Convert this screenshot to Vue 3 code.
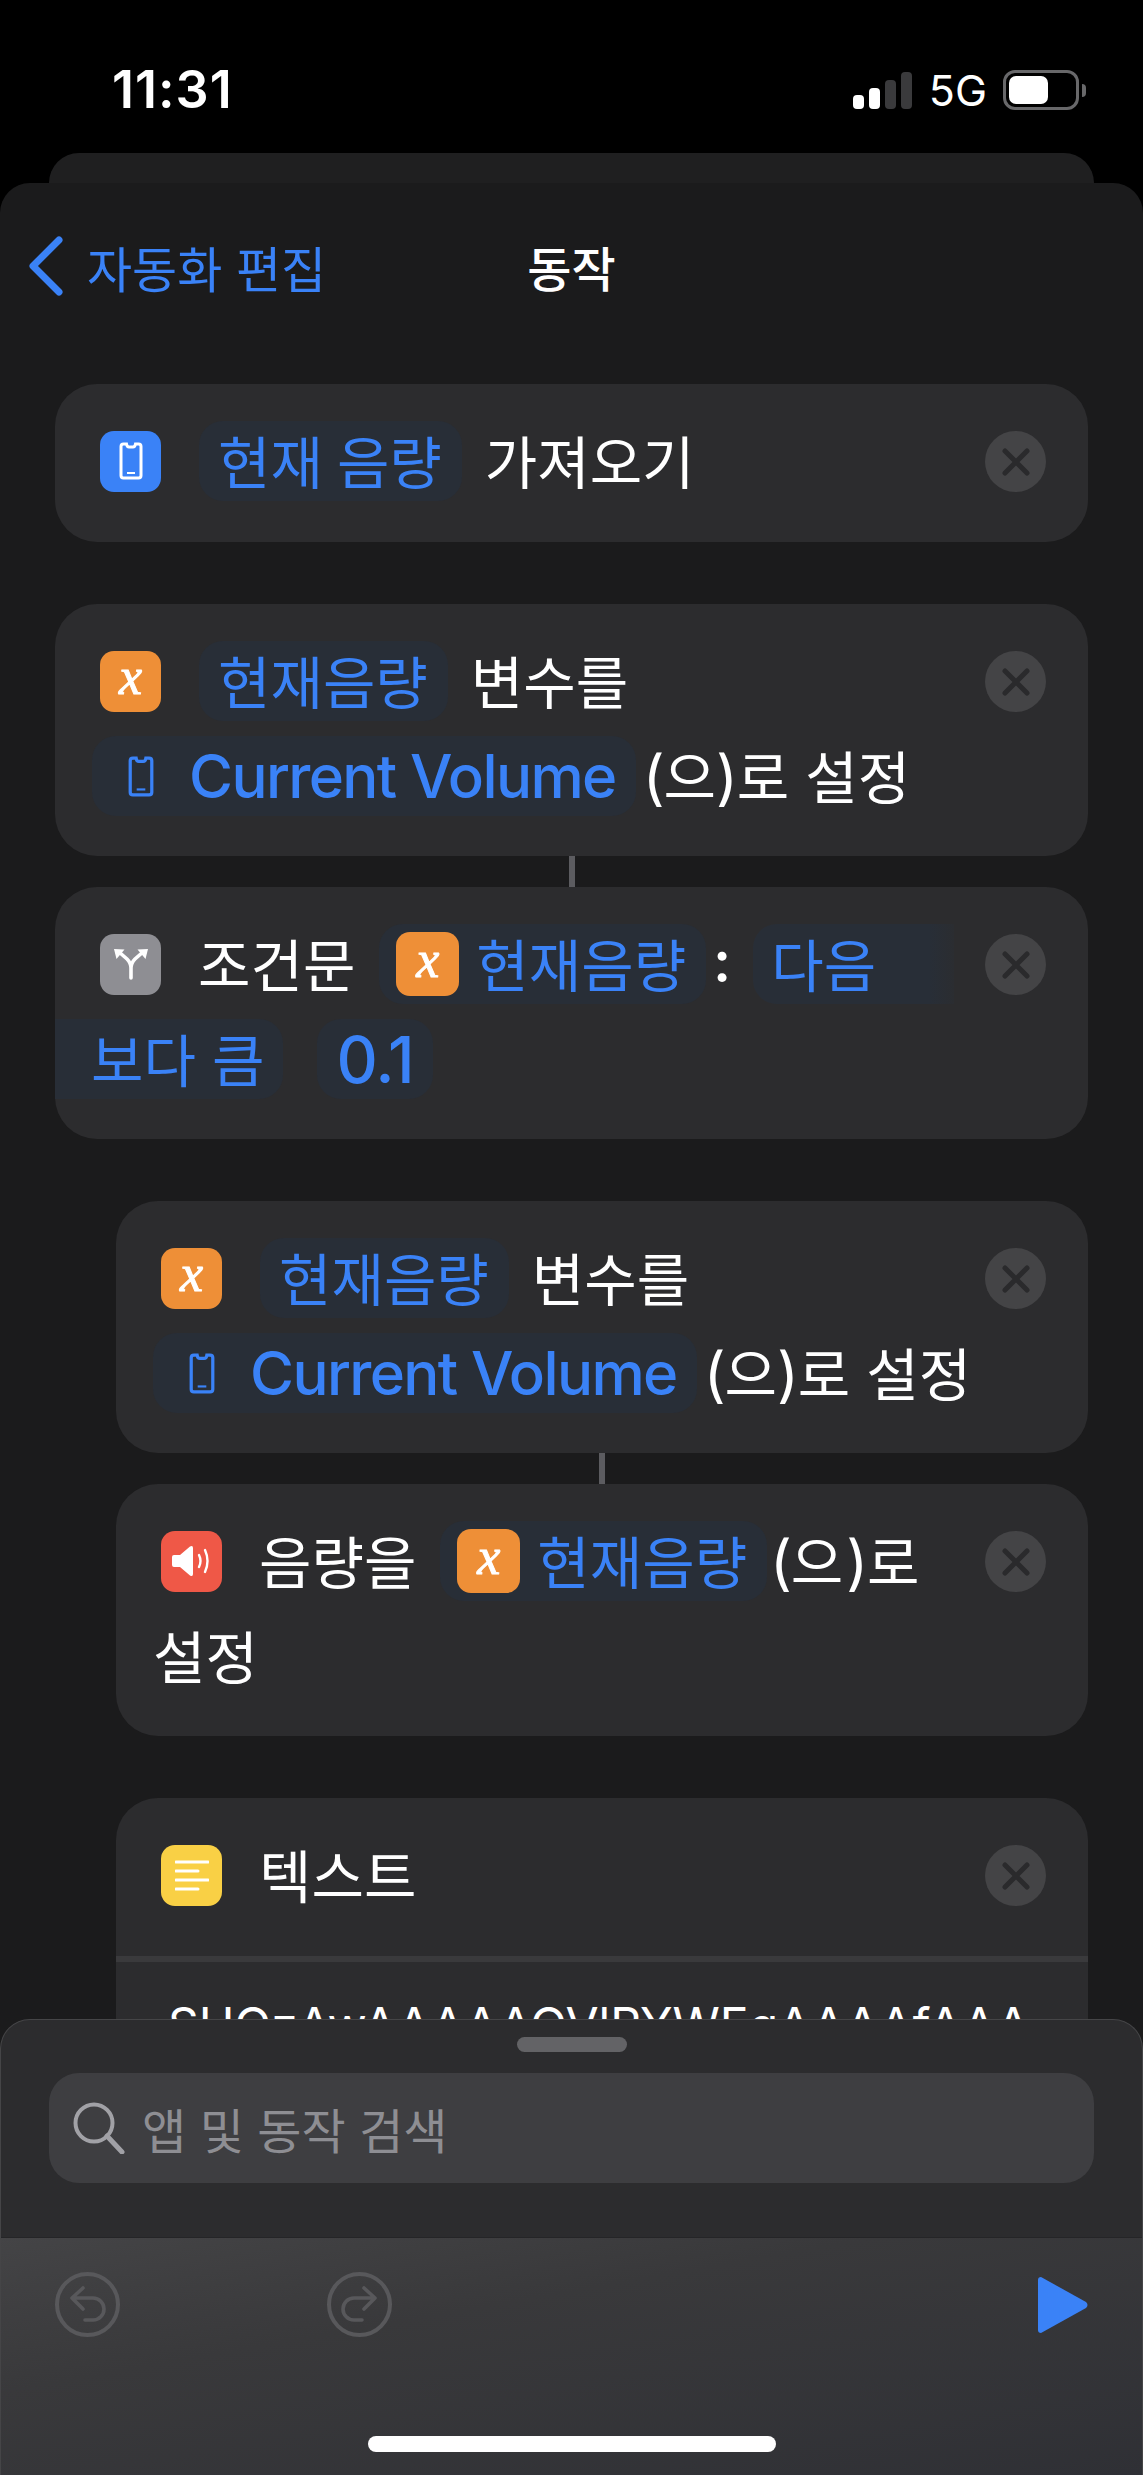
<template>
  <div class="page">
    <div class="status">
      <span class="time">11:31</span>
      <div class="status-right">
        <div class="signal">
          <i class="b1"></i><i class="b2"></i><i class="b3 dim"></i><i class="b4 dim"></i>
        </div>
        <span class="net">5G</span>
        <div class="battery"><div class="level"></div></div>
        <div class="nub"></div>
      </div>
    </div>

    <div class="sheet-back"></div>

    <div class="sheet">
      <div class="nav">
        <div class="back">
          <svg width="36" height="60" viewBox="0 0 36 60"><path d="M31 4 L5 30 L31 56" fill="none" stroke="#3a82f7" stroke-width="7" stroke-linecap="round" stroke-linejoin="round"/></svg>
          <span>자동화 편집</span>
        </div>
        <div class="title">동작</div>
        <div></div>
      </div>

      <div class="list">
        <!-- 현재 음량 -->
        <div class="card short">
          <div class="body">
            <div class="row">
              <span class="icon blue">
                <svg width="24" height="38" viewBox="0 0 24 38"><path d="M4.5 2 H7.5 Q8 5 10 5 H14 Q16 5 16.5 2 H19.5 Q22 2 22 4.5 V33.5 Q22 36 19.5 36 H4.5 Q2 36 2 33.5 V4.5 Q2 2 4.5 2 Z" fill="none" stroke="#fff" stroke-width="3"/><path d="M8 31 H16" stroke="#fff" stroke-width="2"/></svg>
              </span>
              <span class="pill first spaced">현재 음량</span>
              <span class="txt after">가져오기</span>
            </div>
          </div>
          <button class="close"><svg width="28" height="28" viewBox="0 0 28 28"><path d="M3 3 L25 25 M25 3 L3 25" stroke="#2a2a2c" stroke-width="5" stroke-linecap="round"/></svg></button>
        </div>

        <!-- 변수 설정 -->
        <div class="card joined gap">
          <div class="body">
            <div class="row">
              <span class="icon orange">x</span>
              <span class="pill first">현재음량</span>
              <span class="txt after">변수를</span>
            </div>
            <div class="row">
              <span class="pill volume">
                <svg width="26" height="41" viewBox="0 0 24 38"><path d="M4.5 2 H7.5 Q8 5 10 5 H14 Q16 5 16.5 2 H19.5 Q22 2 22 4.5 V33.5 Q22 36 19.5 36 H4.5 Q2 36 2 33.5 V4.5 Q2 2 4.5 2 Z" fill="none" stroke="#3a82f7" stroke-width="3"/><path d="M8 31 H16" stroke="#3a82f7" stroke-width="2"/></svg>
                <span class="lat">Current Volume</span>
              </span>
              <span class="txt paren"><span class="lat">(</span>으<span class="lat">)</span>로 설정</span>
            </div>
          </div>
          <button class="close"><svg width="28" height="28" viewBox="0 0 28 28"><path d="M3 3 L25 25 M25 3 L3 25" stroke="#2a2a2c" stroke-width="5" stroke-linecap="round"/></svg></button>
          <div class="link"></div>
        </div>

        <!-- 조건문 -->
        <div class="card tall gap">
          <div class="body">
            <div class="row">
              <span class="icon gray">
                <svg width="34" height="32" viewBox="0 0 34 32"><path d="M17 30 V20 Q17 15 13 11 L5 4 M17 20 Q17 15 21 11 L29 4" fill="none" stroke="#fff" stroke-width="3.6" stroke-linecap="round"/><path d="M0 1 L10.5 1.5 L2.5 11 Z M34 1 L23.5 1.5 L31.5 11 Z" fill="#fff"/></svg>
              </span>
              <span class="txt label">조건문</span>
              <span class="pill var">
                <span class="icon orange mini">x</span>
                <span class="ko">현재음량</span>
              </span>
              <span class="txt colon">:</span>
              <span class="pill cut">다음</span>
            </div>
            <div class="row">
              <span class="pill bleed">보다 큼</span>
              <span class="pill num"><span class="lat">0.1</span></span>
            </div>
          </div>
          <button class="close"><svg width="28" height="28" viewBox="0 0 28 28"><path d="M3 3 L25 25 M25 3 L3 25" stroke="#2a2a2c" stroke-width="5" stroke-linecap="round"/></svg></button>
        </div>

        <!-- 조건문 안쪽 -->
        <div class="card nested joined gap">
          <div class="body">
            <div class="row">
              <span class="icon orange">x</span>
              <span class="pill first">현재음량</span>
              <span class="txt after">변수를</span>
            </div>
            <div class="row">
              <span class="pill volume">
                <svg width="26" height="41" viewBox="0 0 24 38"><path d="M4.5 2 H7.5 Q8 5 10 5 H14 Q16 5 16.5 2 H19.5 Q22 2 22 4.5 V33.5 Q22 36 19.5 36 H4.5 Q2 36 2 33.5 V4.5 Q2 2 4.5 2 Z" fill="none" stroke="#3a82f7" stroke-width="3"/><path d="M8 31 H16" stroke="#3a82f7" stroke-width="2"/></svg>
                <span class="lat">Current Volume</span>
              </span>
              <span class="txt paren"><span class="lat">(</span>으<span class="lat">)</span>로 설정</span>
            </div>
          </div>
          <button class="close"><svg width="28" height="28" viewBox="0 0 28 28"><path d="M3 3 L25 25 M25 3 L3 25" stroke="#2a2a2c" stroke-width="5" stroke-linecap="round"/></svg></button>
          <div class="link"></div>
        </div>

        <div class="card nested tall">
          <div class="body">
            <div class="row">
              <span class="icon red">
                <svg width="40" height="32" viewBox="0 0 40 32"><path d="M2 10 H8 L18 1.5 Q21 0 21 3 V29 Q21 32 18 30.5 L8 22 H2 Q0 22 0 20 V12 Q0 10 2 10 Z" fill="#fff"/><path d="M27 10 Q30 16 27 22 M33 5 Q38 16 33 27" fill="none" stroke="#fff" stroke-width="2.4" stroke-linecap="round"/></svg>
              </span>
              <span class="txt label">음량을</span>
              <span class="pill var">
                <span class="icon orange mini">x</span>
                <span class="ko">현재음량</span>
              </span>
              <span class="txt paren tight"><span class="lat">(</span>으<span class="lat">)</span>로</span>
            </div>
            <div class="row"><span class="txt">설정</span></div>
          </div>
          <button class="close"><svg width="28" height="28" viewBox="0 0 28 28"><path d="M3 3 L25 25 M25 3 L3 25" stroke="#2a2a2c" stroke-width="5" stroke-linecap="round"/></svg></button>
        </div>

        <!-- 텍스트 -->
        <div class="card nested text-card gap">
          <div class="body">
            <div class="row">
              <span class="icon yellow">
                <svg width="34" height="34" viewBox="0 0 34 34"><path d="M1 4 H33 M1 13 H23 M1 22 H33 M1 31 H23" stroke="#fff" stroke-width="3" stroke-linecap="round"/></svg>
              </span>
              <span class="txt label">텍스트</span>
            </div>
          </div>
          <button class="close"><svg width="28" height="28" viewBox="0 0 28 28"><path d="M3 3 L25 25 M25 3 L3 25" stroke="#2a2a2c" stroke-width="5" stroke-linecap="round"/></svg></button>
          <div class="divider"></div>
          <div class="base64">SUQzAwAAAAAOVlRYWEgAAAAfAAA</div>
        </div>
      </div>
    </div>

    <div class="drawer">
      <div class="handle"></div>
      <div class="search">
        <svg width="52" height="52" viewBox="0 0 52 52"><circle cx="21" cy="21" r="18.5" fill="none" stroke="#a1a1a6" stroke-width="4"/><path d="M34 34 L49 50" stroke="#a1a1a6" stroke-width="5" stroke-linecap="round"/></svg>
        <span>앱 및 동작 검색</span>
      </div>
      <div class="toolbar">
        <div class="tools">
          <div class="history">
            <svg width="65" height="65" viewBox="0 0 65 65"><circle cx="32.5" cy="32.5" r="30.5" fill="none" stroke="#58585b" stroke-width="4"/><path d="M28 16 L17 26 L28 37 M17 26 H38 A11 11 0 0 1 38 48 H30" fill="none" stroke="#58585b" stroke-width="3.6" stroke-linecap="round" stroke-linejoin="round"/></svg>
            <svg width="65" height="65" viewBox="0 0 65 65"><circle cx="32.5" cy="32.5" r="30.5" fill="none" stroke="#58585b" stroke-width="4"/><path d="M37 16 L48 26 L37 37 M48 26 H27 A11 11 0 0 0 27 48 H35" fill="none" stroke="#58585b" stroke-width="3.6" stroke-linecap="round" stroke-linejoin="round"/></svg>
          </div>
          <svg width="50" height="56" viewBox="0 0 50 56"><path d="M3 0 L48 25 Q51 28 48 31 L3 56 Q0 56 0 53 V3 Q0 0 3 0 Z" fill="#3a82f7"/></svg>
        </div>
        <div class="home"></div>
      </div>
    </div>
  </div>
</template>

<script setup>
</script>

<style>
html, body { background: #000; }
</style>

<style scoped>
.page {
  position: relative;
  width: 1143px;
  height: 2475px;
  overflow: hidden;
  background: #000;
  color: #fff;
  font-family: Inter, "Noto Sans CJK KR", sans-serif;
}

/* status bar */
.status {
  height: 153px;
  padding: 0 57px 0 112px;
  box-sizing: border-box;
  display: flex;
  justify-content: space-between;
  align-items: flex-start;
}
.time {
  margin-top: 60px;
  font-size: 52px;
  line-height: 60px;
  font-weight: 600;
  letter-spacing: 1px;
}
.status-right {
  display: flex;
  align-items: center;
  margin-top: 70px;
  height: 40px;
}
.signal { display: flex; align-items: flex-end; gap: 5px; height: 38px; }
.signal i { display: block; width: 11px; border-radius: 4px; background: #fff; }
.signal .b1 { height: 14px; }
.signal .b2 { height: 21px; }
.signal .b3 { height: 29px; }
.signal .b4 { height: 37px; }
.signal .dim { background: #3a3a3c; }
.net { margin-left: 17px; font-size: 43px; line-height: 40px; }
.battery {
  margin-left: 16px;
  width: 76px;
  height: 40px;
  box-sizing: border-box;
  border: 3px solid #68686a;
  border-radius: 12px;
  padding: 3px;
}
.level { width: 39px; height: 100%; border-radius: 7px; background: #fff; }
.nub { width: 4px; height: 13px; margin-left: 3px; background: #68686a; border-radius: 0 4px 4px 0; }

/* sheets */
.sheet-back {
  height: 60px;
  margin: 0 49px -30px;
  border-radius: 30px 30px 0 0;
  background: #1f1f20;
}
.sheet {
  position: relative;
  height: 2292px;
  border-radius: 30px 30px 0 0;
  background: #1b1b1c;
}
.nav {
  height: 166px;
  margin-bottom: 35px;
  display: grid;
  grid-template-columns: 1fr auto 1fr;
  align-items: center;
}
.back {
  display: flex;
  align-items: center;
  gap: 23px;
  padding-left: 28px;
  color: #3a82f7;
  font-size: 49px;
}
.title { font-size: 48px; font-weight: 500; }

/* action cards */
.list { padding: 0 55px; }
.card {
  position: relative;
  display: flex;
  align-items: flex-start;
  padding: 37px 42px 0 37px;
  background: #2c2c2e;
  border-radius: 42px;
  box-sizing: border-box;
  font-size: 57px;
}
.short { height: 158px; }
.joined { height: 252px; }
.tall { height: 252px; }
.gap { margin-top: 62px; }
.joined + .tall { margin-top: 31px; }
.nested { margin-left: 61px; }
.text-card { height: 600px; }
.body { flex: 1; min-width: 0; }
.row { display: flex; align-items: center; height: 80px; margin-bottom: 15px; white-space: nowrap; }
.link {
  position: absolute;
  left: 50%;
  bottom: -31px;
  width: 6px;
  height: 31px;
  margin-left: -3px;
  background: #5c5c60;
}

.icon {
  flex: none;
  width: 61px;
  height: 61px;
  margin-left: 8px;
  border-radius: 14px;
  display: flex;
  align-items: center;
  justify-content: center;
}
.blue { background: #3a82f7; }
.gray { background: #8e8e93; }
.red { background: #ef5847; }
.yellow { background: #f9d045; }
.orange {
  background: #ee8f37;
  color: #fff;
  font-family: "Liberation Serif", serif;
  font-style: italic;
  font-size: 52px;
  line-height: 50px;
  padding-bottom: 8px;
  box-sizing: border-box;
  -webkit-text-stroke: 1px #fff;
}
.mini { width: 63px; height: 64px; margin: 0 17px 0 0; border-radius: 14px; }

/* hangul sits a little low in Noto, so lift it */
.txt, .ko { padding-bottom: 5px; }
.pill {
  display: flex;
  align-items: center;
  height: 80px;
  padding: 0 20px 5px;
  box-sizing: border-box;
  border-radius: 24px;
  background: #282e37;
  color: #3a82f7;
}
.pill.first { margin-left: 38px; padding-left: 19px; }
.spaced { word-spacing: -2px; }
.lat { font-size: 60px; letter-spacing: -1.6px; font-weight: 500; }
.txt .lat { font-weight: 400; letter-spacing: -1.15px; }
.txt.after { margin-left: 23px; }
.txt.paren { margin-left: 7px; }
.txt.tight { margin-left: 3px; letter-spacing: 3px; }
.txt.label { margin-left: 37px; }
.txt.colon { margin: 0 22px 0 7px; font-weight: 600; }
.volume { padding: 0 20px 0 36px; }
.volume svg { margin-right: 35px; }
.var { margin-left: 24px; padding: 0 20px 0 17px; }
.cut {
  width: 201px;
  padding-left: 18px;
  border-radius: 24px 0 0 24px;
  background: linear-gradient(90deg, #282e37 88%, #2b2d31);
}
.bleed {
  margin-left: -37px;
  padding-left: 36px;
  width: 228px;
  border-radius: 0 24px 24px 0;
}
.num { margin-left: 34px; width: 116px; justify-content: center; padding: 0; }
.num .lat { font-size: 64px; letter-spacing: -1px; }

.close {
  flex: none;
  width: 61px;
  height: 61px;
  margin-top: 10px;
  padding: 0;
  border: none;
  border-radius: 50%;
  background: #444446;
  display: flex;
  align-items: center;
  justify-content: center;
}

.divider {
  position: absolute;
  left: 0;
  right: 0;
  top: 158px;
  height: 6px;
  background: #3a3a3c;
}
.base64 {
  position: absolute;
  left: 52px;
  top: 197px;
  font-size: 48px;
  line-height: 60px;
  white-space: nowrap;
}

/* bottom drawer */
.drawer {
  position: absolute;
  left: 0;
  right: 0;
  bottom: 0;
  height: 456px;
  box-sizing: border-box;
  border: 1px solid #454547;
  border-bottom: none;
  border-radius: 30px 30px 0 0;
  background: #2c2c2e;
  overflow: hidden;
}
.handle {
  width: 110px;
  height: 15px;
  margin: 17px auto 21px;
  border-radius: 8px;
  background: #636366;
}
.search {
  height: 110px;
  margin: 0 48px;
  padding-left: 24px;
  border-radius: 30px;
  background: #3e3e41;
  display: flex;
  align-items: center;
  gap: 17px;
  color: #8e8e93;
  font-size: 48px;
}
.toolbar {
  height: 238px;
  margin-top: 54px;
  border-top: 1px solid #252527;
  background: linear-gradient(170deg, #444446 0%, #39393b 35%, #2f3035 100%);
}
.tools {
  display: flex;
  justify-content: space-between;
  align-items: center;
  padding: 34px 54px 0 54px;
}
.history { display: flex; gap: 207px; }
.home {
  width: 408px;
  height: 16px;
  margin: 99px auto 0;
  border-radius: 8px;
  background: #fff;
}
</style>
